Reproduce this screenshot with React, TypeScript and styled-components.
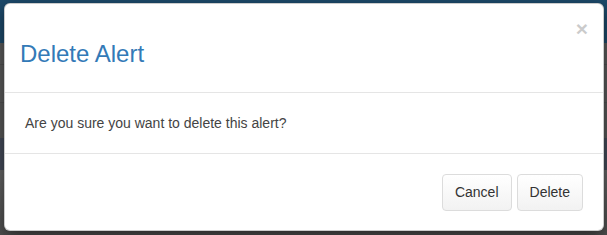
import React from "react";
import styled, { createGlobalStyle } from "styled-components";

const Global = createGlobalStyle`
  html, body { margin: 0; padding: 0; }
  body {
    font-family: "Liberation Sans", Arial, Helvetica, sans-serif;
    font-size: 14px;
    line-height: 1.42857;
    color: #333;
    background: #595959;
  }
  * { box-sizing: border-box; }
`;

const Page = styled.div`
  position: relative;
  width: 607px;
  height: 235px;
  overflow: hidden;
  display: flex;
  flex-direction: column;
  background: #5a5a5a;
`;

const NavBar = styled.div`
  height: 43px;
  flex: none;
  background: #1d4a6b;
`;

const Band = styled.div<{ $h: number; $bg: string; $line?: string }>`
  height: ${(p) => p.$h}px;
  flex: none;
  background: ${(p) => p.$bg};
  border-bottom: ${(p) => (p.$line ? `1px solid ${p.$line}` : "none")};
`;

const Fill = styled.div`
  flex: 1;
  background: linear-gradient(#666666, #4f4f4f);
`;

const Modal = styled.div`
  position: absolute;
  left: 4px;
  top: 3px;
  width: 600px;
  background: #fff;
  border: 1px solid rgba(0, 0, 0, 0.2);
  border-radius: 6px;
  box-shadow: 0 5px 15px rgba(0, 0, 0, 0.5);
  display: flex;
  flex-direction: column;
`;

const Header = styled.div`
  display: flex;
  align-items: flex-start;
  justify-content: space-between;
  padding: 15px;
  border-bottom: 1px solid #e5e5e5;
`;

const Title = styled.h3`
  margin: 21px 0 10px;
  font-size: 24px;
  font-weight: 400;
  line-height: 27px;
  color: #337ab7;
`;

const Close = styled.button`
  margin-top: -1px;
  padding: 0;
  border: 0;
  background: transparent;
  font-family: "Liberation Sans", Arial, sans-serif;
  font-size: 21px;
  font-weight: 700;
  line-height: 1;
  color: #000;
  opacity: 0.2;
  cursor: pointer;
`;

const Body = styled.div`
  padding: 20px 20px 20px 20px;
  line-height: 20px;
  color: #444;
`;

const Footer = styled.div`
  display: flex;
  justify-content: flex-end;
  gap: 5px;
  padding: 20px 20px 19px;
  border-top: 1px solid #e5e5e5;
`;

const Button = styled.button`
  height: 37px;
  padding: 0 12px;
  font-family: "Liberation Sans", Arial, sans-serif;
  font-size: 14px;
  line-height: 19px;
  color: #333;
  background: linear-gradient(#ffffff, #f2f2f2);
  border: 1px solid #dcdcdc;
  border-radius: 4px;
  cursor: pointer;
`;

export default function App() {
  return (
    <>
      <Global />
      <Page>
        <NavBar />
        <Band $h={22} $bg="#5b5b5b" $line="#505050" />
        <Band $h={38} $bg="#5a5a5a" $line="#505050" />
        <Band $h={35} $bg="#585858" />
        <Band $h={32} $bg="#444b59" />
        <Fill />
        <Modal>
          <Header>
            <Title>Delete Alert</Title>
            <Close aria-label="Close">×</Close>
          </Header>
          <Body>Are you sure you want to delete this alert?</Body>
          <Footer>
            <Button>Cancel</Button>
            <Button>Delete</Button>
          </Footer>
        </Modal>
      </Page>
    </>
  );
}
